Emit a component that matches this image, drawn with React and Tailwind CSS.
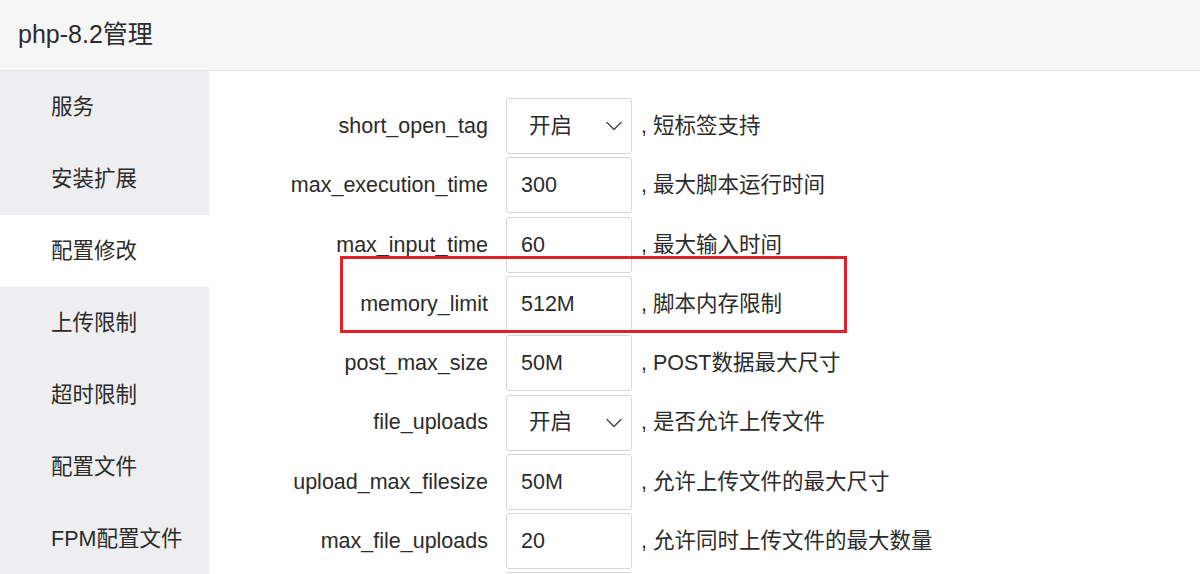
import React from "react";

const font = { fontFamily: '"Liberation Sans", Arial, "Noto Sans CJK SC", sans-serif' };

const menu = ["服务", "安装扩展", "配置修改", "上传限制", "超时限制", "配置文件", "FPM配置文件"];

const rows = [
  { label: "short_open_tag", type: "select", value: "开启", desc: "短标签支持" },
  { label: "max_execution_time", value: "300", desc: "最大脚本运行时间" },
  { label: "max_input_time", value: "60", desc: "最大输入时间" },
  { label: "memory_limit", value: "512M", desc: "脚本内存限制" },
  { label: "post_max_size", value: "50M", desc: "POST数据最大尺寸" },
  { label: "file_uploads", type: "select", value: "开启", desc: "是否允许上传文件" },
  { label: "upload_max_filesize", value: "50M", desc: "允许上传文件的最大尺寸" },
  { label: "max_file_uploads", value: "20", desc: "允许同时上传文件的最大数量" },
];

function Chevron() {
  return (
    <svg width="16" height="10" viewBox="0 0 16 10" fill="none">
      <path d="M1 1.5 L8 8.5 L15 1.5" stroke="#444" strokeWidth="1.4" strokeLinecap="round" strokeLinejoin="round" />
    </svg>
  );
}

export default function App() {
  return (
    <div className="w-[1200px] h-[574px] overflow-hidden bg-white text-[#2b2b2b]" style={font}>
      <div className="h-[71px] bg-[#f6f6f6] border-b border-[#e6e6e6] flex items-center pl-[18px] text-[25px]">
        php-8.2管理
      </div>
      <div className="flex h-[503px]">
        <div className="w-[209px] bg-[#eeeef0] flex flex-col shrink-0">
          {menu.map((m, i) => (
            <div
              key={m}
              className={`h-[72px] shrink-0 flex items-center pl-[51px] text-[21.5px] ${i === 2 ? "bg-white" : ""}`}
            >
              {m}
            </div>
          ))}
        </div>
        <div className="relative flex-1 pt-[25.4px]">
          {rows.map((r) => (
            <div key={r.label} className="h-[59.3px] flex items-center text-[21.5px]">
              <div className="w-[297px] text-right pr-[18px] whitespace-nowrap">{r.label}</div>
              <div className="w-[126px] h-[56px] border border-[#d6d6d6] rounded-[3px] flex items-center shrink-0 bg-white">
                {r.type === "select" ? (
                  <div className="flex items-center justify-between w-full pl-[22px] pr-[9px]">
                    <span>{r.value}</span>
                    <Chevron />
                  </div>
                ) : (
                  <span className="pl-[14px]">{r.value}</span>
                )}
              </div>
              <div className="pl-[9px] whitespace-nowrap">, {r.desc}</div>
            </div>
          ))}
          <div className="h-[59.3px] flex items-center">
            <div className="w-[297px]" />
            <div className="w-[126px] h-[56px] border border-[#d6d6d6] rounded-[3px] shrink-0 bg-white" />
          </div>
          <div className="absolute left-[131px] top-[185px] w-[507px] h-[77px] border-[3px] border-[#e0202b]" />
        </div>
      </div>
    </div>
  );
}
